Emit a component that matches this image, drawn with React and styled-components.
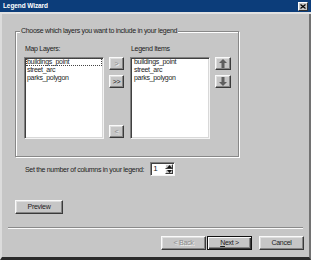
import React from 'react';
import styled, { createGlobalStyle, css } from 'styled-components';

const GREY = '#c6c6c6';

const Global = createGlobalStyle`
  html, body { margin: 0; padding: 0; background: ${GREY}; }
  body { width: 311px; height: 260px; overflow: hidden; }
`;

const Window = styled.div`
  box-sizing: border-box;
  width: 311px;
  height: 260px;
  background: ${GREY};
  display: flex;
  flex-direction: column;
  font-family: "Liberation Sans", Arial, sans-serif;
  font-size: 7px;
  letter-spacing: -0.3px;
  color: #1c1c1c;
`;

const TitleBar = styled.div`
  flex-shrink: 0;
  height: 12px;
  background: #0c3d7a;
  border-bottom: 2px solid #e2e2e2;
  display: flex;
  align-items: center;
  justify-content: space-between;
  padding: 0 3px;
`;

const Title = styled.span`
  color: #fff;
  font-weight: bold;
  font-size: 6.5px;
  letter-spacing: -0.1px;
  line-height: 12px;
`;

const CloseBtn = styled.div`
  box-sizing: border-box;
  width: 10px;
  height: 9px;
  background: ${GREY};
  border: 1px solid;
  border-color: #fff #303030 #303030 #fff;
  display: flex;
  align-items: center;
  justify-content: center;
`;

const Body = styled.div`
  flex: 1;
  display: flex;
  flex-direction: column;
  align-items: flex-start;
  border-left: 2px solid #dcdcdc;
  border-right: 2px solid #727272;
  border-bottom: 3px solid #2a2a2a;
`;

const GroupBox = styled.div`
  box-sizing: border-box;
  width: 224px;
  height: 126px;
  margin: 17px 0 0 13px;
  border: 1px solid #888;
  box-shadow: inset 1px 1px 0 #fff, 1px 1px 0 #fff;
  display: flex;
  flex-direction: column;
  align-items: flex-start;
`;

const GroupTitle = styled.div`
  margin: -5px 0 0 4px;
  padding: 0 1px;
  line-height: 8px;
  background: ${GREY};
`;

const Grid = styled.div`
  margin: 10px 0 0 8px;
  display: grid;
  grid-template-columns: 80px 16px 80px 16px;
  grid-template-rows: 8px 82px;
  column-gap: 5px;
  row-gap: 4px;
`;

const FieldLabel = styled.div`
  line-height: 8px;
  padding-left: 1px;
`;

const ListBox = styled.div`
  box-sizing: border-box;
  background: #fff;
  border: 1px solid;
  border-color: #808080 #f4f4f4 #f4f4f4 #808080;
  box-shadow: inset 1px 1px 0 #404040, inset -1px -1px 0 #d8d8d8;
  padding: 0 1px;
`;

const ListItem = styled.div`
  line-height: 8px;
  height: 8px;
  padding-left: ${p => (p.$pad ? p.$pad : 1)}px;
  white-space: nowrap;
  ${p =>
    p.$focused &&
    css`
      outline: 1px dotted #444;
      outline-offset: -1px;
    `}
`;

const ButtonColumn = styled.div`
  display: flex;
  flex-direction: column;
  align-items: flex-start;
  gap: 5px;
  padding-bottom: 1px;
`;

const raised = css`
  box-sizing: border-box;
  background: ${GREY};
  border: 1px solid;
  border-color: #fafafa #3a3a3a #3a3a3a #fafafa;
  box-shadow: inset -1px -1px 0 #858585, inset 1px 1px 0 #dedede;
  display: flex;
  align-items: center;
  justify-content: center;
`;

const disabledText = css`
  color: #8c8c8c;
  text-shadow: 1px 1px 0 #f4f4f4;
`;

const SmallButton = styled.div`
  ${raised}
  width: ${p => p.$w || 15}px;
  height: 13px;
  line-height: 8px;
  font-size: 7px;
  ${p => p.$disabled && disabledText}
  ${p => p.$push && css`margin-top: auto;`}
`;

const SetRow = styled.div`
  margin: 5px 0 0 23px;
  height: 14px;
  display: flex;
  align-items: center;
  gap: 6px;
`;

const Spinner = styled.div`
  box-sizing: border-box;
  width: 25px;
  height: 14px;
  background: #fff;
  border: 1px solid;
  border-color: #808080 #f4f4f4 #f4f4f4 #808080;
  box-shadow: inset 1px 1px 0 #404040;
  display: flex;
  justify-content: space-between;
  padding: 1px 1px 1px 2px;
`;

const SpinValue = styled.span`
  line-height: 10px;
  font-size: 8px;
`;

const SpinButtons = styled.div`
  display: flex;
  flex-direction: column;
  width: 8px;
`;

const SpinHalf = styled.div`
  ${raised}
  flex: 1;
  border-width: 1px;
  box-shadow: none;
`;

const PushButton = styled.div`
  ${raised}
  width: ${p => p.$w}px;
  height: 14px;
  font-size: 7px;
  line-height: 8px;
  ${p => p.$disabled && disabledText}
  ${p =>
    p.$default &&
    css`
      border: 1px solid #111;
      box-shadow: inset 1px 1px 0 #fafafa, inset -1px -1px 0 #3a3a3a, inset -2px -2px 0 #858585;
    `}
`;

const PreviewButton = styled(PushButton)`
  margin: 24px 0 0 13px;
`;

const Separator = styled.div`
  margin: 13px 0 0 6px;
  width: 295px;
  border-top: 1px solid #8a8a8a;
  border-bottom: 1px solid #fafafa;
`;

const ButtonRow = styled.div`
  align-self: stretch;
  margin-top: 7px;
  padding-right: 5px;
  display: flex;
  justify-content: flex-end;
  gap: 7px;
`;

const Pair = styled.div`
  display: flex;
  gap: 1px;
`;

const Underline = styled.span`
  text-decoration: underline;
`;

const Arrow = ({ up }) => (
  <svg width="8" height="9" viewBox="0 0 8 9">
    <polygon
      points={up ? '4,0 8,4 5.5,4 5.5,9 2.5,9 2.5,4 0,4' : '4,9 8,5 5.5,5 5.5,0 2.5,0 2.5,5 0,5'}
      fill="#5e5e5e"
    />
  </svg>
);

const Tri = ({ up }) => (
  <svg width="5" height="3" viewBox="0 0 5 3">
    <polygon points={up ? '2.5,0 5,3 0,3' : '0,0 5,0 2.5,3'} fill="#111" />
  </svg>
);

const layers = ['buildings_point', 'street_arc', 'parks_polygon'];

export default function App() {
  return (
    <>
      <Global />
      <Window>
        <TitleBar>
          <Title>Legend Wizard</Title>
          <CloseBtn>
            <svg width="6" height="5" viewBox="0 0 6 5">
              <path d="M0.5 0.5 L5.5 4.5 M5.5 0.5 L0.5 4.5" stroke="#000" strokeWidth="1.2" />
            </svg>
          </CloseBtn>
        </TitleBar>
        <Body>
          <GroupBox>
            <GroupTitle>Choose which layers you want to include in your legend</GroupTitle>
            <Grid>
              <FieldLabel>Map Layers:</FieldLabel>
              <div />
              <FieldLabel>Legend Items</FieldLabel>
              <div />
              <ListBox>
                {layers.map((l, i) => (
                  <ListItem key={l} $focused={i === 0}>
                    {l}
                  </ListItem>
                ))}
              </ListBox>
              <ButtonColumn>
                <SmallButton $disabled>&gt;</SmallButton>
                <SmallButton>&gt;&gt;</SmallButton>
                <SmallButton $disabled $push>
                  &lt;
                </SmallButton>
              </ButtonColumn>
              <ListBox>
                {layers.map(l => (
                  <ListItem key={l} $pad={2}>
                    {l}
                  </ListItem>
                ))}
              </ListBox>
              <ButtonColumn>
                <SmallButton $w={16}>
                  <Arrow up />
                </SmallButton>
                <SmallButton $w={16}>
                  <Arrow />
                </SmallButton>
              </ButtonColumn>
            </Grid>
          </GroupBox>
          <SetRow>
            <span>Set the number of columns in your legend:</span>
            <Spinner>
              <SpinValue>1</SpinValue>
              <SpinButtons>
                <SpinHalf>
                  <Tri up />
                </SpinHalf>
                <SpinHalf>
                  <Tri />
                </SpinHalf>
              </SpinButtons>
            </Spinner>
          </SetRow>
          <PreviewButton $w={48}>Preview</PreviewButton>
          <Separator />
          <ButtonRow>
            <Pair>
              <PushButton $w={45} $disabled>
                &lt; Back
              </PushButton>
              <PushButton $w={45} $default>
                <span>
                  <Underline>N</Underline>ext &gt;
                </span>
              </PushButton>
            </Pair>
            <PushButton $w={45}>Cancel</PushButton>
          </ButtonRow>
        </Body>
      </Window>
    </>
  );
}
